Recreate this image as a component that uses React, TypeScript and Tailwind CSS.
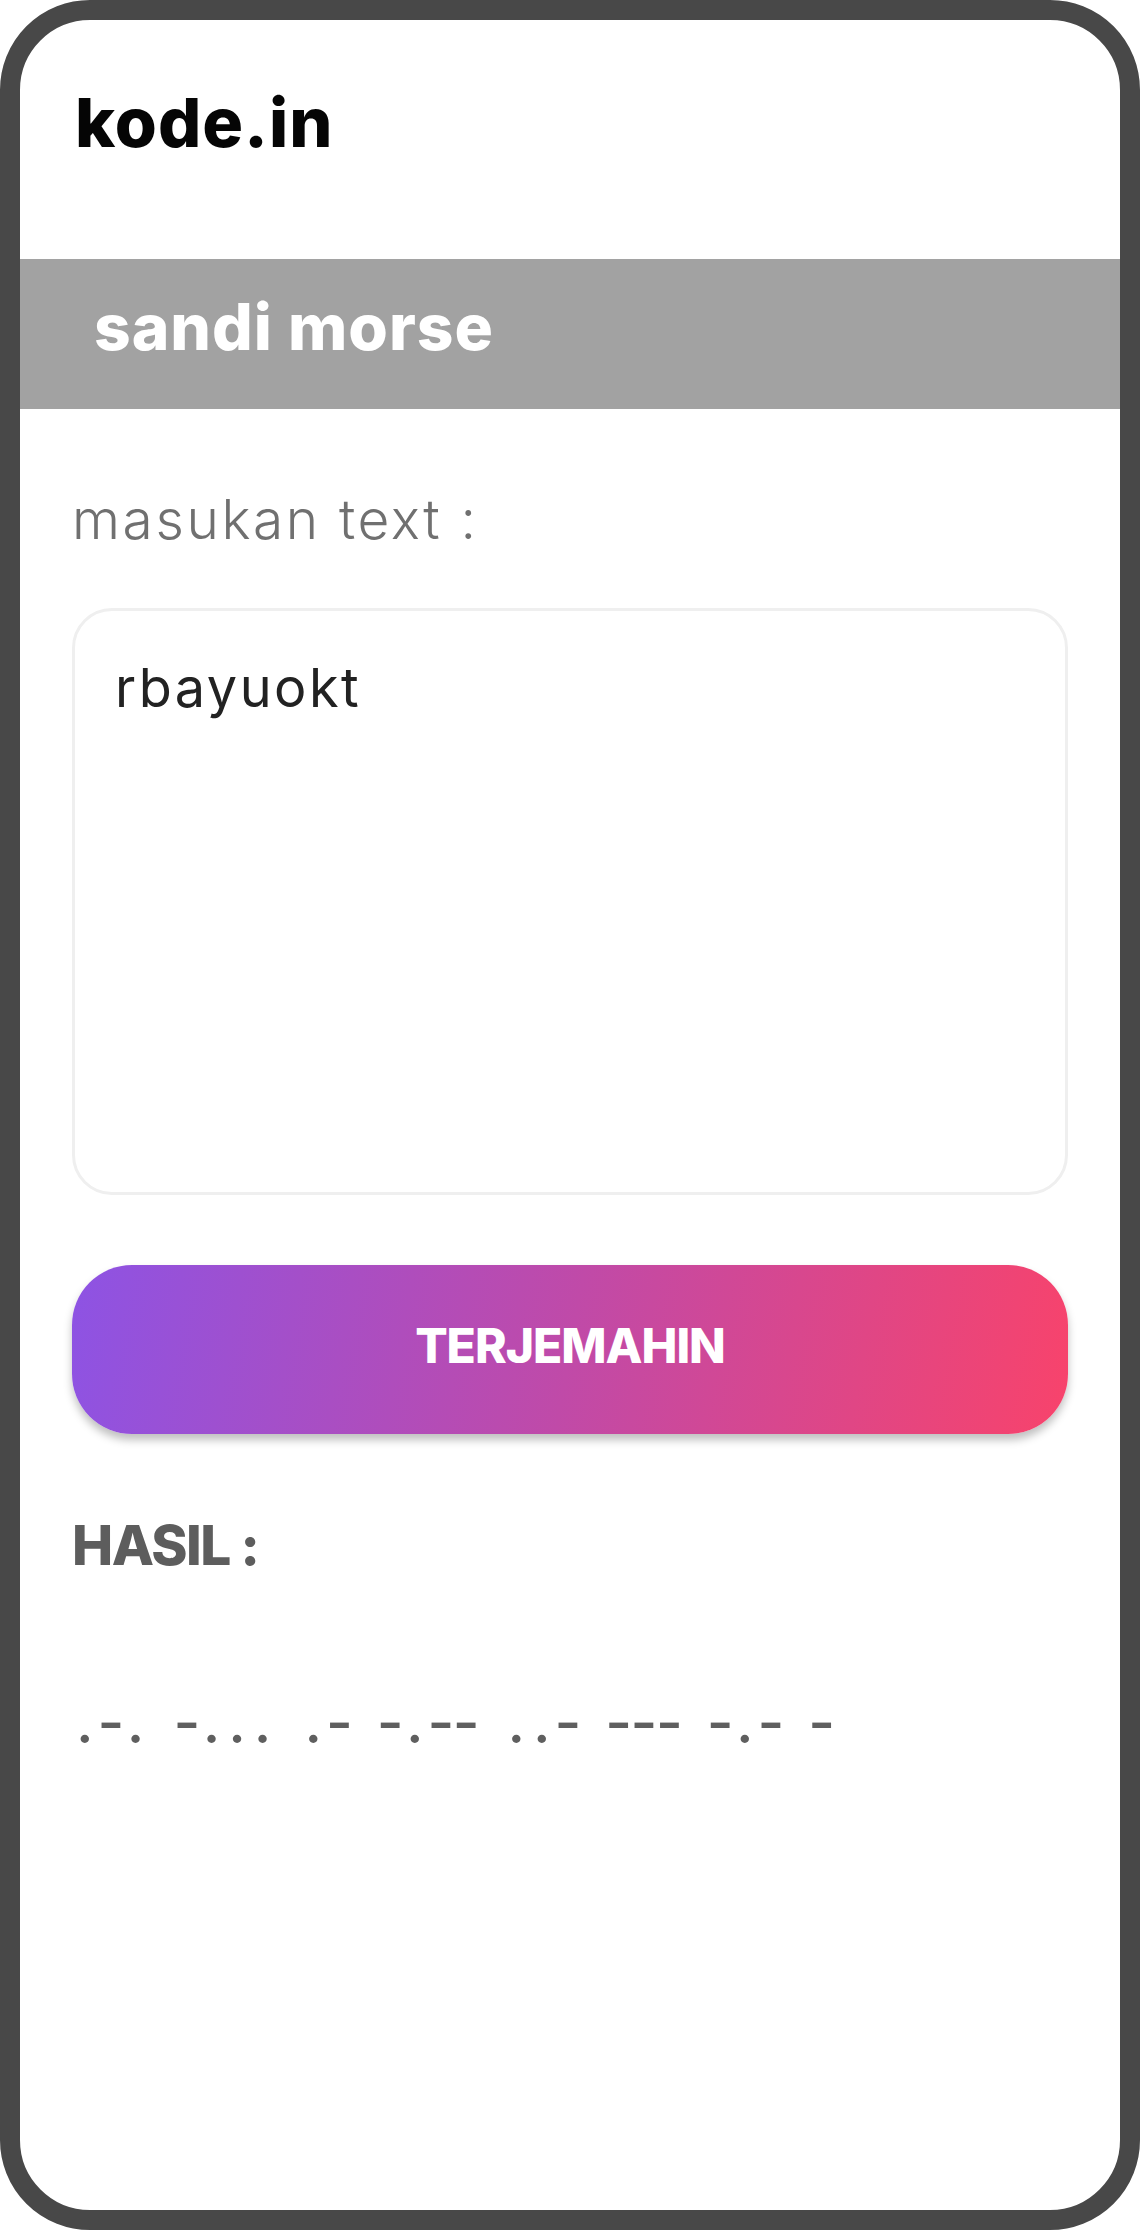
import { useState } from "react";

const CODE: Record<string, string> = {
  a: ".-", b: "-...", c: "-.-.", d: "-..", e: ".", f: "..-.", g: "--.",
  h: "....", i: "..", j: ".---", k: "-.-", l: ".-..", m: "--", n: "-.",
  o: "---", p: ".--.", q: "--.-", r: ".-.", s: "...", t: "-", u: "..-",
  v: "...-", w: ".--", x: "-..-", y: "-.--", z: "--..",
};

const toMorse = (text: string) =>
  text
    .toLowerCase()
    .split("")
    .map((ch) => CODE[ch] ?? "")
    .filter(Boolean)
    .join(" ");

export default function App() {
  const [text, setText] = useState("rbayuokt");
  const [result, setResult] = useState(toMorse("rbayuokt"));

  return (
    <div className="w-[1140px] h-[2230px] bg-white">
      <div
        className="w-full h-full border-[20px] border-[#484848] rounded-[90px] overflow-hidden flex flex-col"
        style={{ fontFamily: "Inter, 'Noto Sans', sans-serif" }}
      >
        <header className="h-[239px] pl-[55px] pt-[68px]">
          <div className="text-[68px] leading-none font-extrabold text-[#050505] tracking-[1px]">
            kode.in
          </div>
        </header>

        <div className="h-[150px] bg-[#a2a2a2] pl-[74px] pt-[36px]">
          <h1 className="text-[64px] leading-none font-extrabold text-white tracking-[1px]">
            sandi morse
          </h1>
        </div>

        <main className="px-[52px] flex flex-col">
          <label className="mt-[83px] text-[55px] leading-none font-light text-[#707070] tracking-[2.6px]">
            masukan text :
          </label>

          <textarea
            value={text}
            onChange={(e) => setText(e.target.value)}
            className="mt-[61px] h-[587px] w-full resize-none rounded-[40px] border-[3px] border-[#efefef] pt-[50px] pl-[40px] pr-[40px] text-[54px] leading-none text-[#222222] tracking-[2.5px] outline-none"
          />

          <button
            type="button"
            onClick={() => setResult(toMorse(text))}
            className="mt-[70px] h-[169px] w-full rounded-[60px] bg-[linear-gradient(100deg,#8d53e4_0%,#c04aa8_50%,#f8436b_100%)] shadow-[0_6px_9px_rgba(0,0,0,0.25)] flex items-center justify-center pb-[8px]"
          >
            <span className="text-[48px] leading-none font-extrabold text-white tracking-[-1px]">
              TERJEMAHIN
            </span>
          </button>

          <h2 className="mt-[84px] text-[55px] leading-none font-extrabold text-[#5d5d5d] tracking-[-1.5px]">
            HASIL :
          </h2>

          <div className="mt-[120px] flex text-[58px] leading-none font-medium text-[#5f5f5f]">
            {result.split("").map((ch, i) => (
              <span key={i} className="w-[25.4px] text-center inline-block">
                {ch === " " ? "\u00a0" : ch}
              </span>
            ))}
          </div>
        </main>
      </div>
    </div>
  );
}
